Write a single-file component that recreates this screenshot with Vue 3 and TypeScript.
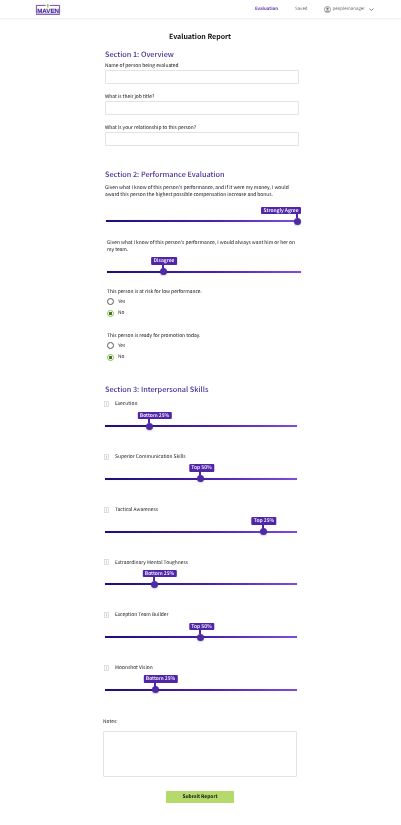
<script setup lang="ts">
const overview = ['Name of person being evaluated', 'What is their job title?', 'What is your relationship to this person?']
const radios = ['This person is at risk for low performance.', 'This person is ready for promotion today.']
const skills = [
  { name: 'Execution', tag: 'Bottom 25%', pos: 44, tagPos: 49.5 },
  { name: 'Superior Communication Skills', tag: 'Top 50%', pos: 95, tagPos: 96.5 },
  { name: 'Tactical Awareness', tag: 'Top 25%', pos: 158, tagPos: 159 },
  { name: 'Extraordinary Mental Toughness', tag: 'Bottom 25%', pos: 49, tagPos: 54.5 },
  { name: 'Exception Team Builder', tag: 'Top 50%', pos: 95, tagPos: 96.5 },
  { name: 'Moonshot Vision', tag: 'Bottom 25%', pos: 50, tagPos: 55.5 },
]
</script>

<template>
  <div class="page">
    <header class="top">
      <svg class="logo" viewBox="0 0 24 12" width="24" height="12">
        <circle cx="11.8" cy="1" r="1" fill="#8cc63f" />
        <path d="M11.8 2V3.6" stroke="#8cc63f" stroke-width="1.2" />
        <path d="M0.4 9.5V1.4H9.8M13.8 1.4H23.6V9.5" fill="none" stroke="#4b2a9b" stroke-width="0.8" />
        <text x="1.2" y="8.7" class="logo-text">MAVEN</text>
        <path d="M0 10.2H24" stroke="#4b2a9b" stroke-width="1" />
      </svg>
      <nav class="nav">
        <a class="nav-item active">Evaluation</a>
        <a class="nav-item">Saved</a>
        <span class="user">
          <svg viewBox="0 0 12 12" width="7" height="7">
            <circle cx="6" cy="6" r="5.2" fill="none" stroke="#777" stroke-width="1.2" />
            <circle cx="6" cy="4.6" r="2" fill="#777" />
            <path d="M2.6 9.6C3.4 7.6 8.6 7.6 9.4 9.6" fill="#777" stroke="#777" />
          </svg>
          <span>peoplemanager</span>
          <svg class="chevron" viewBox="0 0 10 6" width="5" height="3">
            <path d="M1 1L5 5L9 1" fill="none" stroke="#666" stroke-width="1.6" />
          </svg>
        </span>
      </nav>
    </header>

    <main class="form">
      <h1 class="title">Evaluation Report</h1>

      <section class="overview">
        <h2 class="heading">Section 1: Overview</h2>
        <div v-for="q in overview" :key="q" class="field">
          <label class="label">{{ q }}</label>
          <div class="input"></div>
        </div>
      </section>

      <section class="performance">
        <h2 class="heading">Section 2: Performance Evaluation</h2>
        <p class="text">Given what I know of this person's performance, and if it were my money, I would award this person the highest possible compensation increase and bonus.</p>
        <div class="slider first">
          <span class="tag" style="left: 175px">Strongly Agree</span>
          <span class="pointer" style="left: 191px"></span>
          <span class="thumb" style="left: 191px"></span>
        </div>
        <div class="indented">
          <p class="text">Given what I know of this person's performance, I would always want him or her on my team.</p>
          <div class="slider second">
            <span class="tag" style="left: 57px">Disagree</span>
            <span class="pointer" style="left: 56px"></span>
            <span class="thumb" style="left: 56px"></span>
          </div>
          <div v-for="r in radios" :key="r" class="radio-group">
            <p class="text">{{ r }}</p>
            <div class="radio"><span class="dot"></span>Yes</div>
            <div class="radio"><span class="dot on"></span>No</div>
          </div>
        </div>
      </section>

      <section class="skills">
        <h2 class="heading">Section 3: Interpersonal Skills</h2>
        <div v-for="s in skills" :key="s.name" class="skill">
          <div class="skill-name">
            <svg class="info" viewBox="0 0 5 6" width="5" height="6">
              <rect x="0.3" y="0.3" width="4.4" height="5.4" rx="0.4" fill="none" stroke="#bbb" stroke-width="0.6" />
              <path d="M2.5 1.6V4.6" stroke="#bbb" stroke-width="0.7" />
            </svg>
            <span>{{ s.name }}</span>
          </div>
          <div class="slider">
            <span class="tag" :style="{ left: s.tagPos + 'px' }">{{ s.tag }}</span>
            <span class="pointer" :style="{ left: s.pos + 'px' }"></span>
            <span class="thumb" :style="{ left: s.pos + 'px' }"></span>
          </div>
        </div>
      </section>

      <section class="notes">
        <label class="label">Notes:</label>
        <div class="textarea"></div>
      </section>

      <button class="submit" type="button">Submit Report</button>
    </main>
  </div>
</template>

<style>
html, body { margin: 0; background: #fff; }
</style>

<style scoped>
.page {
  width: 401px;
  height: 825px;
  overflow: hidden;
  color: #111;
  font-family: "Noto Sans CJK SC", "Noto Sans", sans-serif;
  font-size: 4.9px;
  line-height: 7.4px;
  text-rendering: geometricPrecision;
  will-change: transform;
}
.top {
  height: 18px;
  box-sizing: border-box;
  padding: 4px 27px 0 36px;
  display: flex;
  justify-content: space-between;
  box-shadow: 0 1px 2px rgba(0, 0, 0, 0.08);
}
.logo { display: block; overflow: visible; }
.logo-text { font: 700 6.2px "Liberation Sans", sans-serif; fill: #4b2a9b; stroke: #4b2a9b; stroke-width: 0.15px; }
.nav { display: flex; align-items: center; height: 11px; color: #777; font-size: 4.4px; }
.nav-item { margin-right: 16px; }
.active { color: #5b3aa5; font-weight: 600; margin-right: 17px; }
.user { display: flex; align-items: center; gap: 2px; }
.chevron { margin-left: 2px; }
.form { width: 196px; margin-left: 103px; }
.title {
  margin: 14px 0 0;
  width: 194px;
  text-align: center;
  font-size: 7px;
  line-height: 10px;
  font-weight: 600;
  color: #111;
}
.heading {
  margin: 0;
  font-size: 7.3px;
  line-height: 10px;
  font-weight: 500;
  color: #4b2f9c;
}
.overview { margin: 8px 0 0 2px; }
.field { margin-bottom: 9px; }
.label { display: block; line-height: 7px; }
.overview .label { margin: 2px 0 1px; }
.input {
  width: 194px;
  height: 14px;
  box-sizing: border-box;
  background: #fff;
  border: 1px solid #e3e3e3;
  border-radius: 1px;
}
.performance { margin: 24px 0 0 2px; }
.text { margin: 0; }
.performance > .text { margin-top: 4px; }
.slider {
  position: relative;
  height: 2px;
  background: linear-gradient(90deg, #1c1070, #4b22a8 55%, #7c4fd6);
  width: 192px;
  box-shadow: 0 0 1px rgba(80, 38, 167, 0.25);
}
.first { margin: 21.5px 0 0 1px; width: 191px; }
.indented { margin: 16.7px 0 0 2px; }
.second { margin-top: 16.9px; width: 194px; }
.tag {
  position: absolute;
  bottom: 8px;
  transform: translateX(-50%);
  white-space: nowrap;
  padding: 0 2.5px;
  background: #5026a7;
  color: #fff;
  font-size: 5px;
  font-weight: 500;
  line-height: 7.5px;
  border-radius: 1px;
}
.pointer {
  position: absolute;
  bottom: 4px;
  width: 2px;
  height: 4px;
  margin-left: -1px;
  background: #5026a7;
}
.thumb {
  position: absolute;
  top: 50%;
  width: 7px;
  height: 7px;
  margin: -3.5px 0 0 -3.5px;
  border-radius: 50%;
  background: #4f2aa6;
  box-shadow: 0 1px 2px rgba(0, 0, 0, 0.2);
}
.radio-group { margin-top: 15.5px; }
.second + .radio-group { margin-top: 15.3px; }
.radio { display: flex; align-items: center; gap: 4px; height: 7px; margin-top: 4.3px; color: #222; }
.text + .radio { margin-top: 2.8px; }
.dot {
  width: 7px;
  height: 7px;
  box-sizing: border-box;
  border: 0.7px solid #555;
  border-radius: 50%;
  background: #fff;
}
.dot.on { border-color: #8cbf4d; background: radial-gradient(circle, #3f7a2a 0 1.5px, #fff 1.7px); }
.skills { margin: 24.5px 0 0 2px; }
.skill { height: 52.7px; }
.heading + .skill { margin-top: 5.7px; }
.skill-name { display: flex; align-items: center; gap: 6px; height: 7px; margin-bottom: 17.6px; color: #222; }
.info { margin-left: -1px; }
.notes { margin-top: 1.1px; }
.notes .label { margin-bottom: 6px; color: #222; }
.textarea {
  width: 194px;
  height: 46px;
  box-sizing: border-box;
  border: 1px solid #e3e3e3;
  border-radius: 1px;
}
.submit {
  display: block;
  width: 68px;
  height: 12px;
  margin: 14px 0 0 63px;
  padding: 0;
  border: 0;
  border-radius: 1px;
  background: #b5d96b;
  color: #111;
  font: 600 4.9px/12px "Noto Sans CJK SC", sans-serif;
  text-rendering: geometricPrecision;
}
</style>
